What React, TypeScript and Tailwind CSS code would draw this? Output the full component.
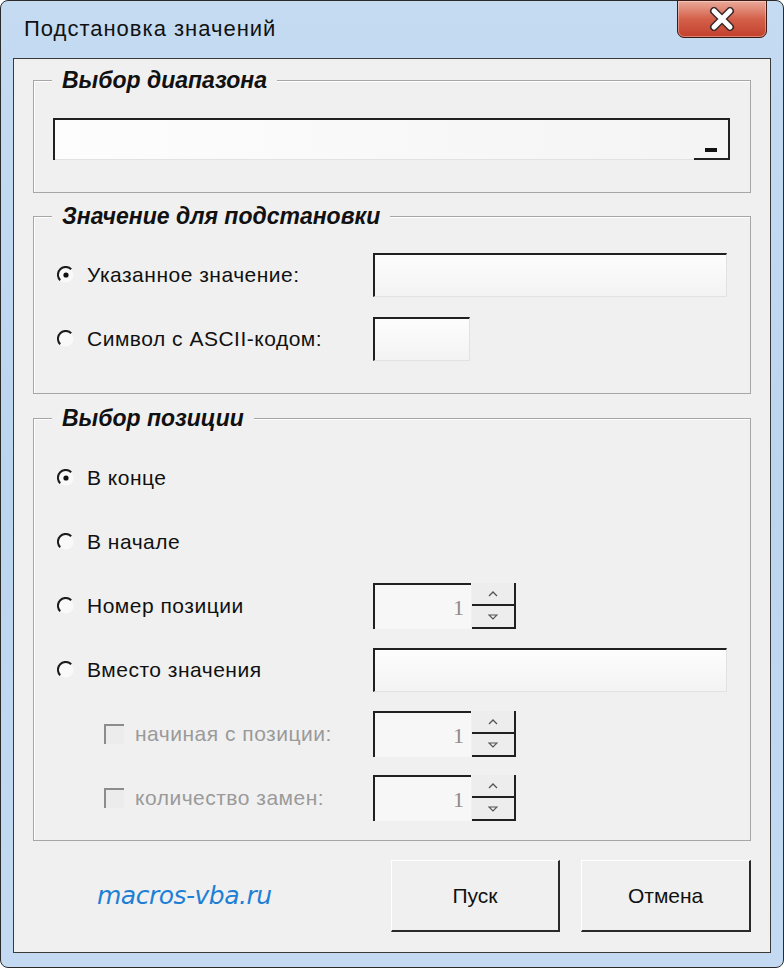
const ui = "font-['Liberation_Sans','DejaVu_Sans',sans-serif]";

function Radio({ checked }: { checked?: boolean }) {
  return (
    <svg width="18" height="18" viewBox="0 0 18 18" className="shrink-0">
      <circle cx="9" cy="9" r="7.5" fill="#f9f9f9" />
      <path d="M3.2 14.2 A7.5 7.5 0 0 1 14.2 3.2" stroke="#1c1c1c" strokeWidth="2" fill="none" />
      {checked && <circle cx="9" cy="9" r="2.6" fill="#111" />}
    </svg>
  );
}

function Check() {
  return <span className="w-[20px] h-[20px] shrink-0 border-t-2 border-l-2 border-[#8c8c8c] bg-[#ececec]" />;
}

function TextBox({ w }: { w: string }) {
  return (
    <div className={`${w} h-[44px] border-t-2 border-l-2 border-[#202020] border-r border-b border-r-[#e2e2e2] border-b-[#e2e2e2] bg-gradient-to-b from-[#fdfdfd] to-[#f3f3f3]`} />
  );
}

function Spin() {
  return (
    <div className="flex h-[46px]">
      <div className="w-[98px] h-full border-t-2 border-l-2 border-[#202020] bg-[#f7f7f7] flex items-center justify-end pr-[7px] text-[22px] text-[#8a8a8a] font-['Liberation_Serif',serif]">
        1
      </div>
      <div className="w-[44px] h-full ml-[1px] flex flex-col border-r-2 border-b-2 border-[#202020] bg-[#ededed]">
        <div className="flex-1 flex items-center justify-center border-b-2 border-[#202020]">
          <svg width="10" height="6" viewBox="0 0 10 6"><path d="M1 5 L5 1 L9 5" stroke="#555" strokeWidth="1.3" fill="none" /></svg>
        </div>
        <div className="flex-1 flex items-center justify-center">
          <svg width="10" height="6" viewBox="0 0 10 6"><path d="M1 1 L5 5 L9 1 Z" stroke="#555" strokeWidth="1.1" fill="none" /></svg>
        </div>
      </div>
    </div>
  );
}

function Group({ title, h, children }: { title: string; h: string; children: React.ReactNode }) {
  return (
    <div className={`relative ${h} border border-[#a6a6a6] shadow-[inset_1px_1px_0_#fff]`}>
      <span className="absolute -top-[15px] left-[18px] px-[10px] bg-[#f0f0f0] text-[23px] leading-[28px] font-bold italic text-[#111]">
        {title}
      </span>
      {children}
    </div>
  );
}

function RadioRow({ label, checked, children }: { label: string; checked?: boolean; children?: React.ReactNode }) {
  return (
    <div className="flex items-center h-[46px]">
      <div className="w-[316px] flex items-center gap-[12px]">
        <Radio checked={checked} />
        <span className="text-[21px] tracking-[0.5px] text-[#111]">{label}</span>
      </div>
      {children}
    </div>
  );
}

function CheckRow({ label }: { label: string }) {
  return (
    <div className="flex items-center h-[46px]">
      <div className="w-[316px] pl-[47px] flex items-center gap-[11px]">
        <Check />
        <span className="text-[21px] tracking-[0.5px] text-[#9a9a9a]">{label}</span>
      </div>
      <Spin />
    </div>
  );
}

export default function App() {
  return (
    <div className={`${ui} w-[784px] h-[968px] flex flex-col rounded-[8px] border border-[#2a2a2a] bg-gradient-to-b from-[#c4dbf2] via-[#bcd5ef] to-[#c3daf2]`}>
      <div className="h-[57px] flex items-start">
        <span className="pl-[23px] pt-[14px] text-[22px] leading-[28px] tracking-[1px] text-[#111]">Подстановка значений</span>
        <div className="ml-auto mr-[16px] w-[90px] h-[38px] -mt-[1px] rounded-b-[7px] border border-[#3e1a12] bg-gradient-to-b from-[#e9a99a] via-[#d4604a] to-[#c2402c] flex items-center justify-center shadow-[inset_0_0_0_1px_rgba(255,255,255,0.35)]">
          <svg width="30" height="24" viewBox="0 0 30 24">
            <path d="M7 4 L23 20 M23 4 L7 20" stroke="#3a2a2a" strokeWidth="8" strokeLinecap="round" />
            <path d="M7 4 L23 20 M23 4 L7 20" stroke="#fff" strokeWidth="5" strokeLinecap="round" />
          </svg>
        </div>
      </div>

      <div className="flex-1 mx-[12px] mb-[14px] border border-[#3a3a3a] bg-[#f0f0f0] px-[19px] pt-[21px] flex flex-col">
        <Group title="Выбор диапазона" h="h-[113px]">
          <div className="ml-[19px] mt-[37px] w-[677px] h-[42px] flex border-t-2 border-l-2 border-r-2 border-[#202020] bg-gradient-to-r from-[#fdfdfd] to-[#f4f4f4]">
            <div className="flex-1 border-b border-[#e2e2e2]" />
            <div className="w-[34px] border-b-2 border-[#202020] flex items-end justify-center pb-[6px]">
              <span className="w-[12px] h-[4px] bg-[#111]" />
            </div>
          </div>
        </Group>

        <div className="mt-[23px]">
          <Group title="Значение для подстановки" h="h-[178px]">
            <div className="pl-[23px] pt-[35px] flex flex-col gap-[18px]">
              <RadioRow label="Указанное значение:" checked>
                <TextBox w="w-[354px]" />
              </RadioRow>
              <RadioRow label="Символ с ASCII-кодом:">
                <TextBox w="w-[97px]" />
              </RadioRow>
            </div>
          </Group>
        </div>

        <div className="mt-[24px]">
          <Group title="Выбор позиции" h="h-[423px]">
            <div className="pl-[23px] pt-[36px] flex flex-col gap-[18px]">
              <RadioRow label="В конце" checked />
              <RadioRow label="В начале" />
              <RadioRow label="Номер позиции">
                <Spin />
              </RadioRow>
              <RadioRow label="Вместо значения">
                <TextBox w="w-[354px]" />
              </RadioRow>
              <CheckRow label="начиная с позиции:" />
              <CheckRow label="количество замен:" />
            </div>
          </Group>
        </div>

        <div className="mt-[19px] flex items-center pl-[64px]">
          <span className="w-[294px] text-[25px] italic text-[#1e7fd6] font-['DejaVu_Sans',sans-serif] tracking-[-0.5px]">macros-vba.ru</span>
          <button className="w-[170px] h-[72px] border-t border-l border-white border-r-2 border-b-2 border-r-[#2a2a2a] border-b-[#2a2a2a] bg-[#f0f0f0] text-[21px] text-[#111]">
            Пуск
          </button>
          <button className="ml-[21px] w-[170px] h-[72px] border-t border-l border-white border-r-2 border-b-2 border-r-[#2a2a2a] border-b-[#2a2a2a] bg-[#f0f0f0] text-[21px] text-[#111]">
            Отмена
          </button>
        </div>
      </div>
    </div>
  );
}
